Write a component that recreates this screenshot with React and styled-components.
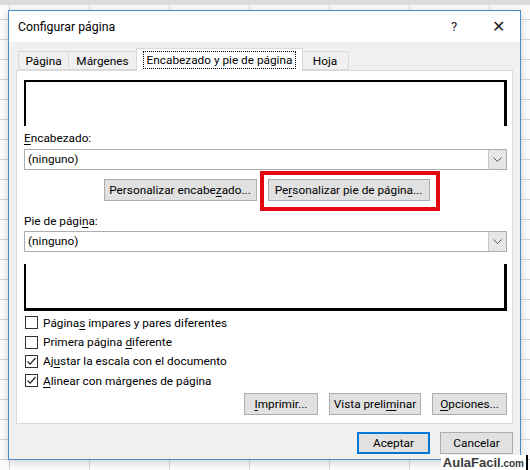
import React from 'react';
import styled, { createGlobalStyle } from 'styled-components';

const GlobalStyle = createGlobalStyle`
  html, body {
    margin: 0;
    padding: 0;
  }
  body {
    font-family: Roboto, "Noto Sans", "Liberation Sans", sans-serif;
    font-size: 11.8px;
    color: #000;
    background-color: #fbfbfb;
    background-image:
      linear-gradient(to bottom, #dcdcdc 0, #dcdcdc 5px, transparent 5px),
      repeating-linear-gradient(to bottom, transparent 0, transparent 19px, #d4d4d4 19px, #d4d4d4 20px),
      repeating-linear-gradient(to right, transparent 0, transparent 9px, #d4d4d4 9px, #d4d4d4 10px, transparent 10px, transparent 80px);
    background-size: 100% 100%, 100% 100%, 80px 100%;
  }
`;

const Screen = styled.div`
  position: relative;
  width: 530px;
  height: 470px;
  padding: 10px 9px 0 8px;
  box-sizing: border-box;
`;

const Dialog = styled.div`
  width: 513px;
  height: 450px;
  box-sizing: border-box;
  border: 1px solid #4d8cc8;
  background: #f0f0f0;
  display: flex;
  flex-direction: column;
  box-shadow: 0 2px 8px rgba(0, 0, 0, 0.18);
`;

const TitleBar = styled.div`
  height: 31px;
  background: #fff;
  display: flex;
  align-items: center;
  padding: 0 0 0 9px;
  font-size: 12.3px;
`;

const Title = styled.div`
  flex: 1;
`;

const TitleIcon = styled.span`
  width: 44px;
  text-align: center;
  font-size: ${p => p.$big ? '16px' : '13px'};
  color: #222;
`;

const Body = styled.div`
  flex: 1;
  display: flex;
  flex-direction: column;
  padding: 6px 7px 5px 7px;
`;

const TabStrip = styled.div`
  display: flex;
  align-items: flex-end;
  height: 22px;
  padding-left: 2px;
  position: relative;
  z-index: 1;
`;

const Tab = styled.div`
  height: ${p => p.$active ? '23px' : '19px'};
  box-sizing: border-box;
  display: flex;
  align-items: center;
  justify-content: center;
  white-space: nowrap;
  margin: 0 ${p => p.$active ? '-1px' : '0'} ${p => p.$active ? '-1px' : '0'};
  background: ${p => p.$active ? '#fff' : '#f0f0f0'};
  border: 1px solid #d9d9d9;
  border-bottom: ${p => p.$active ? 'none' : '1px solid #d9d9d9'};
  border-left: ${p => p.$first || p.$active ? '1px solid #d9d9d9' : 'none'};
  position: relative;
  z-index: ${p => p.$active ? 2 : 0};
  color: #000;
  width: ${p => p.$w}px;
`;

const FocusText = styled.span`
  border: 1px dotted #000;
  padding: 0 3px;
  line-height: 16px;
`;

const Panel = styled.div`
  height: 354px;
  box-sizing: border-box;
  background: #fff;
  border: 1px solid #d9d9d9;
  padding: 0 5px 0 7px;
  display: flex;
  flex-direction: column;
`;

const Preview = styled.div`
  height: ${p => p.$h}px;
  margin-top: ${p => p.$mt}px;
  box-sizing: border-box;
  border-left: 2px solid #000;
  border-right: 3px solid #000;
  border-top: ${p => p.$top ? '2px solid #000' : 'none'};
  border-bottom: ${p => p.$top ? 'none' : '3px solid #000'};
`;

const Label = styled.div`
  height: 17px;
  line-height: 17px;
  margin-top: ${p => p.$mt}px;
`;

const U = styled.span`
  text-decoration: underline;
  text-underline-offset: 2px;
`;

const Select = styled.div`
  height: 21px;
  margin-top: ${p => p.$mt}px;
  box-sizing: border-box;
  border: 1px solid #abadb3;
  display: flex;
  align-items: stretch;
`;

const SelectValue = styled.div`
  flex: 1;
  padding-left: 3px;
  line-height: 19px;
`;

const SelectArrow = styled.div`
  width: 17px;
  background: #e6e6e6;
  border-left: 1px solid #c8c8c8;
  display: flex;
  align-items: center;
  justify-content: center;
`;

const CenterRow = styled.div`
  display: flex;
  justify-content: center;
  gap: 11px;
  margin-top: 9px;
  padding-left: 2px;
`;

const RightRow = styled.div`
  display: flex;
  justify-content: flex-end;
  gap: ${p => p.$gap}px;
  margin-top: ${p => p.$mt}px;
`;

const Button = styled.div`
  height: 22px;
  box-sizing: border-box;
  width: ${p => p.$w}px;
  background: #e1e1e1;
  border: ${p => p.$default ? '2px solid #0078d7' : '1px solid #adadad'};
  display: flex;
  align-items: center;
  justify-content: center;
  white-space: nowrap;
`;

const Highlight = styled.div`
  position: relative;
  &::after {
    content: '';
    position: absolute;
    left: -8px;
    right: -10px;
    top: -8px;
    bottom: -10px;
    border: 4px solid #e30613;
  }
`;

const CheckList = styled.div`
  margin-top: 2px;
  display: flex;
  flex-direction: column;
`;

const CheckRow = styled.div`
  height: 19.4px;
  display: flex;
  align-items: center;
  gap: 5px;
  padding-left: 1px;
`;

const Box = styled.div`
  width: 13px;
  height: 13px;
  box-sizing: border-box;
  border: 1px solid #333;
  background: #fff;
  display: flex;
  align-items: center;
  justify-content: center;
`;

const Watermark = styled.div`
  position: absolute;
  right: 2px;
  bottom: -1px;
  font-family: "Liberation Sans", Arial, sans-serif;
  font-weight: bold;
  color: #3a3a3a;
  font-size: 13px;
  line-height: 15px;
  background: #fff;
  padding: 0 2px 0 2px;
  border-right: 2px solid #000;
  small {
    font-size: 10px;
  }
`;

const Chevron = () => (
  <svg width="9" height="6" viewBox="0 0 9 6">
    <polyline points="0.5,0.5 4.5,4.5 8.5,0.5" fill="none" stroke="#555" strokeWidth="1" />
  </svg>
);

const Check = () => (
  <svg width="11" height="11" viewBox="0 0 11 11">
    <polyline points="1.5,5.5 4.2,8.2 9.5,2" fill="none" stroke="#222" strokeWidth="1.2" />
  </svg>
);

const Checkbox = ({ checked, children }) => (
  <CheckRow>
    <Box>{checked && <Check />}</Box>
    <span>{children}</span>
  </CheckRow>
);

const App = () => {
  return (
    <>
      <GlobalStyle />
      <Screen>
        <Dialog>
          <TitleBar>
            <Title>Configurar página</Title>
            <TitleIcon>?</TitleIcon>
            <TitleIcon $big>✕</TitleIcon>
          </TitleBar>
          <Body>
            <TabStrip>
              <Tab $first $w={51}>Página</Tab>
              <Tab $w={68}>Márgenes</Tab>
              <Tab $active $w={167}><FocusText>Encabezado y pie de página</FocusText></Tab>
              <Tab $w={47}>Hoja</Tab>
            </TabStrip>
            <Panel>
              <Preview $top $h={46} $mt={9} />
              <Label $mt={4}><U>E</U>ncabezado:</Label>
              <Select $mt={2}>
                <SelectValue>(ninguno)</SelectValue>
                <SelectArrow><Chevron /></SelectArrow>
              </Select>
              <CenterRow>
                <Button $w={153}>Personalizar encabe<U>z</U>ado...</Button>
                <Highlight>
                  <Button $w={162}>Pe<U>r</U>sonalizar pie de página...</Button>
                </Highlight>
              </CenterRow>
              <Label $mt={12}>Pie de pági<U>n</U>a:</Label>
              <Select $mt={1}>
                <SelectValue>(ninguno)</SelectValue>
                <SelectArrow><Chevron /></SelectArrow>
              </Select>
              <Preview $h={47} $mt={12} />
              <CheckList>
                <Checkbox>Página<U>s</U> impares y pares diferentes</Checkbox>
                <Checkbox>Primera página <U>d</U>iferente</Checkbox>
                <Checkbox checked>Aj<U>u</U>star la escala con el documento</Checkbox>
                <Checkbox checked><U>A</U>linear con márgenes de página</Checkbox>
              </CheckList>
              <RightRow $gap={11} $mt={2}>
                <Button $w={74}><U>I</U>mprimir...</Button>
                <Button $w={92}>Vista preli<U>m</U>inar</Button>
                <Button $w={75}><U>O</U>pciones...</Button>
              </RightRow>
            </Panel>
            <RightRow $gap={10} $mt={8}>
              <Button $default $w={73}>Aceptar</Button>
              <Button $w={73}>Cancelar</Button>
            </RightRow>
          </Body>
        </Dialog>
        <Watermark>AulaFacil<small>.com</small></Watermark>
      </Screen>
    </>
  );
};

export default App;
